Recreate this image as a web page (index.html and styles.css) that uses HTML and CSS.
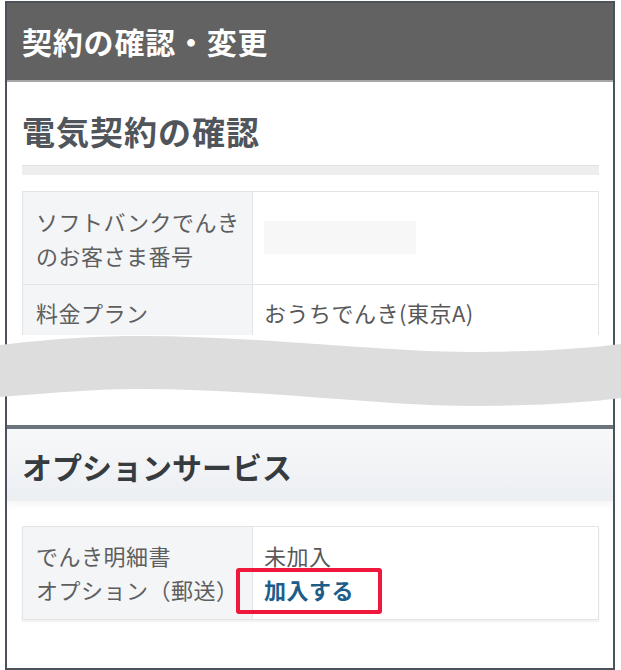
FILE: index.html
```html
<!DOCTYPE html>
<html lang="ja">
<head>
<meta charset="utf-8">
<link rel="stylesheet" href="styles.css">
</head>
<body>
<div class="page">
  <div class="frame">
    <div class="top-bar">契約の確認・変更</div>
    <div class="cut">
      <div class="section">
        <h2 class="sec-title">電気契約の確認</h2>
        <div class="divider"></div>
        <div class="kv">
          <div class="k k-tall">ソフトバンクでんき<br>のお客さま番号</div>
          <div class="v v-tall"><span class="masked"></span></div>
          <div class="k k-short">料金プラン</div>
          <div class="v v-short">おうちでんき(東京A)</div>
        </div>
      </div>
    </div>
    <div class="gap"></div>
    <div class="opt-head">オプションサービス</div>
    <div class="section">
      <div class="kv kv2">
        <div class="k k-tall">でんき明細書<br>オプション（郵送）</div>
        <div class="v v-tall">未加入<br><a class="join" href="#">加入する</a></div>
      </div>
    </div>
  </div>
  <svg class="wave" width="621" height="80" viewBox="0 0 621 80" aria-hidden="true">
    <path d="M0 15 C 60 8, 100 6, 140 6 C 260 6, 380 22, 470 22 C 540 22, 590 18, 621 14 L 621 68 C 590 72, 540 76, 470 76 C 380 76, 260 59, 140 59 C 100 59, 60 62, 0 67 Z" fill="#dddddd"/>
  </svg>
</div>
</body>
</html>
```
FILE: styles.css
```css
html, body {
  margin: 0;
  padding: 0;
  background: #ffffff;
}
body {
  font-family: "Noto Sans CJK JP", "Noto Sans", sans-serif;
  color: #555555;
}
.page {
  position: relative;
  width: 621px;
  height: 670px;
  overflow: hidden;
}
.frame {
  box-sizing: border-box;
  margin: 1px 0 0 5px;
  width: 610px;
  height: 669px;
  border: 2px solid #4b525b;
  background: #ffffff;
  overflow: hidden;
}
.top-bar {
  height: 77px;
  line-height: 77px;
  background: #626262;
  border-bottom: 2px solid #a7a7a7;
  color: #ffffff;
  font-size: 30px;
  font-weight: 700;
  padding-left: 15px;
  letter-spacing: 0.8px;
}
.cut {
  height: 253px;
  overflow: hidden;
}
.section {
  padding: 0 14px 0 15px;
}
.sec-title {
  margin: 29px 0 0;
  font-size: 33px;
  line-height: 40px;
  font-weight: 700;
  color: #50555b;
  letter-spacing: 1px;
}
.divider {
  margin-top: 14px;
  height: 9px;
  background: #eeeeee;
  border-top: 1px solid #e0e0e0;
}
.kv {
  margin-top: 16px;
  display: grid;
  grid-template-columns: 230px 1fr;
  border-top: 1px solid #e3e4e6;
  border-left: 1px solid #e3e4e6;
  font-size: 22px;
  line-height: 34px;
  letter-spacing: 0.5px;
}
.k, .v {
  border-right: 1px solid #e3e4e6;
  border-bottom: 1px solid #e3e4e6;
}
.k {
  background: #f4f5f7;
  padding-left: 13px;
  color: #5e5e5e;
}
.v {
  padding-left: 11px;
  color: #585858;
}
.k-tall, .v-tall {
  padding-top: 12px;
  padding-bottom: 12px;
}
.k-short, .v-short {
  padding-top: 10px;
  padding-bottom: 10px;
}
.masked {
  display: block;
  margin-top: 17px;
  width: 152px;
  height: 33px;
  background: #f7f7f7;
}
.gap {
  height: 90px;
}
.opt-head {
  border-top: 4px solid #6b737c;
  height: 72px;
  line-height: 74px;
  padding-left: 15px;
  background: linear-gradient(#f7f8fa, #eceff2);
  box-shadow: 0 5px 6px rgba(0, 0, 0, 0.035);
  color: #363b40;
  font-size: 30px;
  font-weight: 700;
}
.kv2 {
  margin-top: 25px;
  box-shadow: 0 2px 2px rgba(0, 0, 0, 0.06);
}
.kv2 .k-tall, .kv2 .v-tall {
  padding-top: 11px;
  padding-bottom: 13px;
}
.join {
  position: relative;
  display: inline-block;
  color: #1d5d8a;
  font-weight: 700;
  text-decoration: none;
}
.join::after {
  content: "";
  position: absolute;
  left: -28px;
  top: -4px;
  width: 146px;
  height: 46px;
  box-sizing: border-box;
  border: 4px solid #f0173c;
  border-radius: 3px;
}
.wave {
  position: absolute;
  left: 0;
  top: 330px;
}
```
